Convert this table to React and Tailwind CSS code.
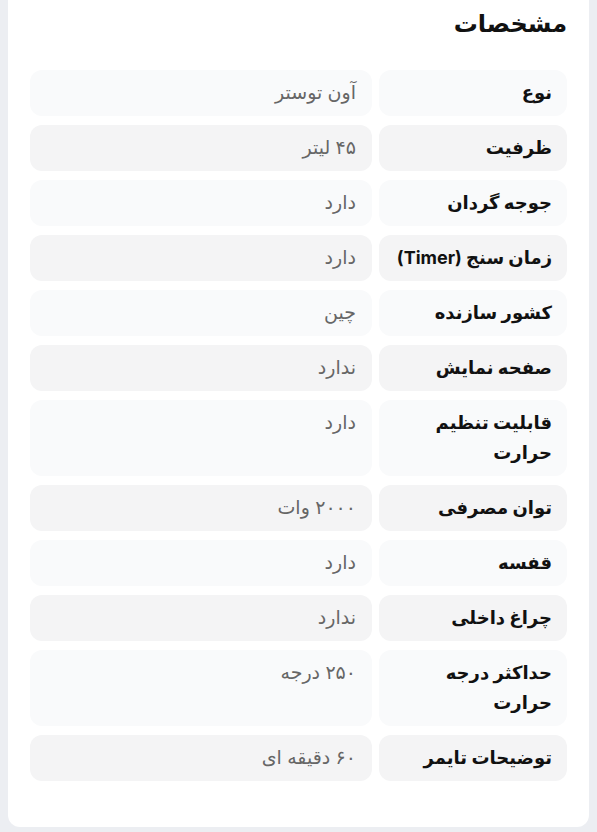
import React from 'react';

const specs = [
  { label: 'نوع', value: 'آون توستر' },
  { label: 'ظرفیت', value: '۴۵ لیتر' },
  { label: 'جوجه گردان', value: 'دارد' },
  { label: 'زمان سنج (Timer)', value: 'دارد' },
  { label: 'کشور سازنده', value: 'چین' },
  { label: 'صفحه نمایش', value: 'ندارد' },
  { label: 'قابلیت تنظیم حرارت', value: 'دارد' },
  { label: 'توان مصرفی', value: '۲۰۰۰ وات' },
  { label: 'قفسه', value: 'دارد' },
  { label: 'چراغ داخلی', value: 'ندارد' },
  { label: 'حداکثر درجه حرارت', value: '۲۵۰ درجه' },
  { label: 'توضیحات تایمر', value: '۶۰ دقیقه ای' },
];

const SpecRow = ({ label, value, shaded }) => {
  const bg = shaded ? 'bg-[#f4f4f5]' : 'bg-[#f9fafb]';
  return (
    <div className="flex gap-[7px]">
      <div className={`${bg} w-[188px] shrink-0 rounded-xl py-2 pr-[15px] pl-3 text-[18px] font-bold leading-[30px] text-[#111]`}>
        {label}
      </div>
      <div className={`${bg} flex-1 rounded-xl py-2 pr-4 pl-3 text-[19px] leading-[30px] text-[#666]`}>
        {value}
      </div>
    </div>
  );
};

export default function App() {
  return (
    <div
      dir="rtl"
      className="min-h-screen bg-[#eceef2] px-2 pb-[6px]"
      style={{ fontFamily: 'Inter, "DejaVu Sans", sans-serif' }}
    >
      <div className="rounded-b-xl bg-white px-[22px] pt-[6px] pb-[46px]">
        {/* Header */}
        <h2 className="mb-[28px] text-[24px] font-bold leading-[36px] text-[#111]">مشخصات</h2>

        {/* Spec table */}
        <div className="flex flex-col gap-[9px]">
          {specs.map((s, i) => (
            <SpecRow key={i} label={s.label} value={s.value} shaded={i % 2 === 1} />
          ))}
        </div>
      </div>
    </div>
  );
}
